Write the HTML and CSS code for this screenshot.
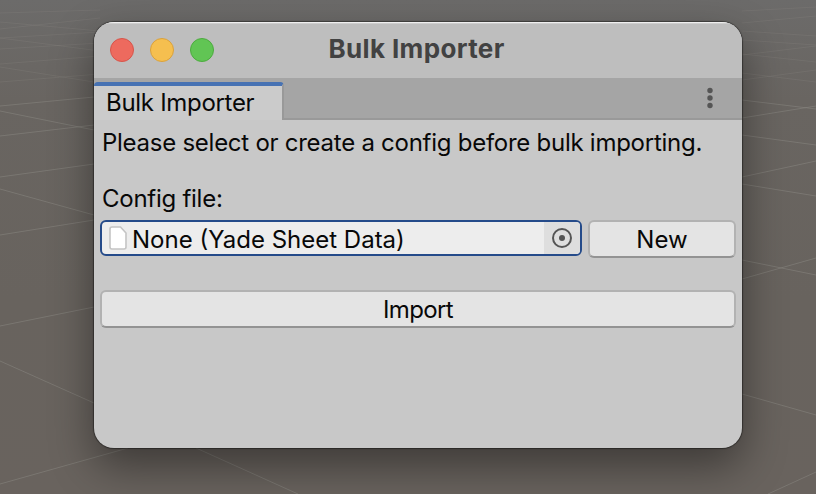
FILE: index.html
```html
<!DOCTYPE html>
<html lang="en">
<head>
<meta charset="utf-8">
<title>Bulk Importer</title>
<link rel="stylesheet" href="styles.css">
</head>
<body>
<svg class="scene-grid" viewBox="0 0 816 494" aria-hidden="true">
  <g class="far">
    <path d="M0 13L100 10M0 29L100 18M0 38L100 32M0 49L100 43M0 64L100 56M0 82L100 74M0 22L100 31M0 38L100 51M0 67L100 83"/>
    <path d="M742 11L816 7M742 23L816 16M742 31L816 36M742 40L816 45M742 55L816 46M742 54L816 62M742 80L816 70M742 73L816 82"/>
  </g>
  <path d="M0 106L94 97M0 136L94 125M0 177L94 164M0 235L94 220M0 326L94 307M0 111L94 130M0 189L94 215M0 361L94 403L118 413M0 484L128 448"/>
  <path d="M742 100L816 109M742 118L816 106M742 135L816 145M742 177L816 161M742 184L816 196M742 260L816 275M742 279L816 258M742 394L816 415M768 494L816 472M196 448L298 494"/>
</svg>
<main class="window">
  <header class="titlebar">
    <div class="lights"><i class="light red"></i><i class="light yellow"></i><i class="light green"></i></div>
    <h1><span>Bulk Importer</span></h1>
  </header>
  <nav class="tabs">
    <div class="tab"><span>Bulk Importer</span></div>
    <svg class="more" viewBox="0 0 6 22"><circle cx="3" cy="3.5" r="2.7"/><circle cx="3" cy="11" r="2.7"/><circle cx="3" cy="18.5" r="2.7"/></svg>
  </nav>
  <section class="content">
    <p class="message"><span>Please select or create a config before bulk importing.</span></p>
    <p class="label"><span>Config file:</span></p>
    <div class="row">
      <div class="field">
        <svg class="file" viewBox="0 0 18 24"><path d="M3 1H11.5L17 7V21Q17 23 15 23H3Q1 23 1 21V3Q1 1 3 1Z"/></svg>
        <span class="value">None (Yade Sheet Data)</span>
        <div class="picker"><svg viewBox="0 0 20 20"><circle class="ring" cx="10" cy="10" r="9"/><circle class="dot" cx="10" cy="10" r="3"/></svg></div>
      </div>
      <button class="new"><span>New</span></button>
    </div>
    <button class="import"><span>Import</span></button>
  </section>
</main>
</body>
</html>
```
FILE: styles.css
```css
* { box-sizing: border-box; }
body {
  margin: 0;
  width: 816px;
  height: 494px;
  padding: 22px 74px 46px 94px;
  overflow: hidden;
  background: linear-gradient(#6c6b6a 0, #696561 100px, #68635e 300px, #69635e 494px);
  font-family: Inter, "Liberation Sans", sans-serif;
  font-size: 24px;
  color: #080808;
}
.scene-grid {
  position: absolute;
  inset: 0;
  width: 816px;
  height: 494px;
  fill: none;
  stroke: #8b8983;
  stroke-opacity: .5;
}
.scene-grid .far { stroke-opacity: .25; }
.window {
  position: relative;
  width: 648px;
  height: 426px;
  border-radius: 20px;
  overflow: hidden;
  background: #c8c8c8;
  box-shadow: 0 0 1px 1px rgba(0,0,0,.4), 0 18px 44px rgba(0,0,0,.42);
}
.titlebar {
  display: grid;
  grid-template-columns: 136px 1fr 136px;
  align-items: center;
  height: 56px;
  background: #bebebe;
  box-shadow: inset 0 1px #efefef, inset 0 2px #cdcdcd;
}
.lights { display: flex; gap: 16px; padding-left: 16px; }
.light { width: 24px; height: 24px; border: 1px solid; border-radius: 50%; }
.red { background: #ed6a5e; border-color: #d6554b; }
.yellow { background: #f5bf4f; border-color: #d9a13c; }
.green { background: #61c554; border-color: #4dab3f; }
h1 {
  margin: 0;
  padding-right: 3px;
  text-align: center;
  font-size: 26px;
  font-weight: 700;
  letter-spacing: .36px;
  line-height: 54px;
  height: 56px;
  color: #424242;
}
.tabs {
  display: flex;
  justify-content: space-between;
  height: 42px;
  padding-top: 4px;
  background: linear-gradient(#a5a5a5 0 40px, #999 40px);
}
.tab {
  width: 190px;
  height: 38px;
  padding-left: 12px;
  border-top: 4px solid #4772b3;
  border-right: 2px solid #999;
  border-radius: 4px 4px 0 0;
  background: #cbcbcb;
  line-height: 34px;
  letter-spacing: -.3px;
}
.more { width: 6px; height: 22px; margin: 5px 29px 0 0; fill: #555; }
.content { padding: 0 6px; }
p { margin: 0; padding-left: 2px; line-height: 36px; letter-spacing: -.26px; }
.message { padding-top: 5px; height: 61px; white-space: nowrap; }
.label { height: 39px; }
.row { display: flex; align-items: flex-start; gap: 6px; }
.field {
  display: flex;
  align-items: center;
  width: 482px;
  height: 36px;
  padding-left: 7px;
  border: 2px solid #254b8a;
  border-radius: 6px;
  overflow: hidden;
  background: #ededed;
}
.file { width: 18px; height: 24px; margin-right: 5px; fill: #fff; stroke: #c4c4c4; stroke-width: 1.6; }
.value { flex: 1; line-height: 34px; padding-top: 3px; white-space: nowrap; }
.picker { display: grid; place-items: center; width: 36px; height: 32px; background: #dedede; }
.picker svg { width: 20px; height: 20px; }
.ring { fill: none; stroke: #555; stroke-width: 2; }
.dot { fill: #555; }
button {
  height: 38px;
  padding: 0;
  border: 2px solid #b2b2b2;
  border-bottom-color: #939393;
  border-radius: 6px;
  background: #e4e4e4;
  font: inherit;
  line-height: 34px;
  color: inherit;
}
button span { position: relative; top: 1px; }
.new { width: 148px; }
.import { width: 636px; margin-top: 32px; letter-spacing: -.6px; }
```
